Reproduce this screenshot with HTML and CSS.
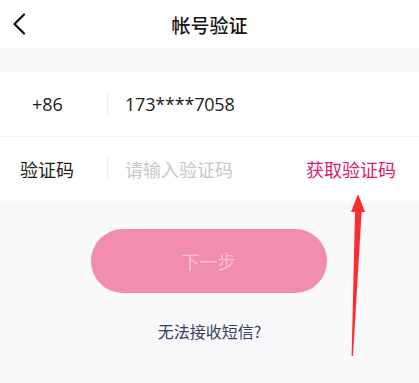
FILE: index.html
```html
<!DOCTYPE html>
<html lang="zh">
<head>
<meta charset="utf-8">
<link rel="stylesheet" href="styles.css">
</head>
<body>
<div class="page">
  <header class="nav">
    <svg class="back" width="14" height="22" viewBox="0 0 14 22"><path d="M12 1.5 L2.5 11 L12 20.5" fill="none" stroke="#111" stroke-width="2.2" stroke-linecap="round" stroke-linejoin="round"/></svg>
    <h1 class="title">帐号验证</h1>
  </header>
  <div class="band"></div>
  <section class="form">
    <div class="row">
      <div class="label code">+86</div>
      <div class="sep"></div>
      <div class="value">173****7058</div>
    </div>
    <div class="row">
      <div class="label">验证码</div>
      <div class="sep"></div>
      <div class="placeholder">请输入验证码</div>
      <div class="get">获取验证码</div>
    </div>
  </section>
  <div class="actions">
    <button class="next">下一步</button>
    <div class="help">无法接收短信?</div>
  </div>
  <svg class="arrow" width="20" height="165" viewBox="0 0 20 165"><path d="M9 0 L16 18 L12.6 18 L4 162 L2.6 162 L6 18 L2 18 Z" fill="#fb2d2f"/></svg>
</div>
</body>
</html>
```
FILE: styles.css
```css
html, body { margin: 0; padding: 0; }
body {
  background: #f9f8fb;
  font-family: "Noto Sans CJK SC", "Noto Sans", sans-serif;
  width: 419px;
  height: 383px;
  overflow: hidden;
}
.page { position: relative; width: 419px; height: 383px; }
.nav {
  height: 48px;
  background: #fff;
  display: flex;
  align-items: center;
  justify-content: center;
  position: relative;
}
.back { position: absolute; left: 12px; top: 13px; }
.title { margin: 0; font-size: 19px; font-weight: 500; color: #161616; }
.band { height: 24px; }
.form { background: #fff; }
.row {
  height: 64px;
  display: flex;
  align-items: center;
  font-size: 18px;
  color: #1c1c1c;
}
.row + .row { border-top: 1px solid #f3f2f5; }
.label { width: 107px; box-sizing: border-box; padding-left: 20px; }
.label.code { padding-left: 32px; font-family: "Open Sans", "Noto Sans", sans-serif; font-size: 18px; }
.sep { width: 1px; height: 24px; background: #f0eff2; }
.value { margin-left: 17px; font-family: "Open Sans", "Noto Sans", sans-serif; font-size: 18px; letter-spacing: -0.2px; }
.placeholder { margin-left: 17px; color: #c8c8cc; flex: 1; }
.get { color: #d8226e; margin-right: 23px; }
.actions { display: flex; flex-direction: column; align-items: center; }
.next {
  margin-top: 28px;
  margin-right: 2px;
  width: 236px;
  height: 64px;
  border: none;
  border-radius: 32px;
  background: #f28cb0;
  color: #f9c3d6;
  font-family: inherit;
  font-size: 18px;
  padding: 0;
}
.help { margin-top: 26px; font-size: 16px; color: #38405e; }
.arrow { position: absolute; left: 349px; top: 194px; }
```
